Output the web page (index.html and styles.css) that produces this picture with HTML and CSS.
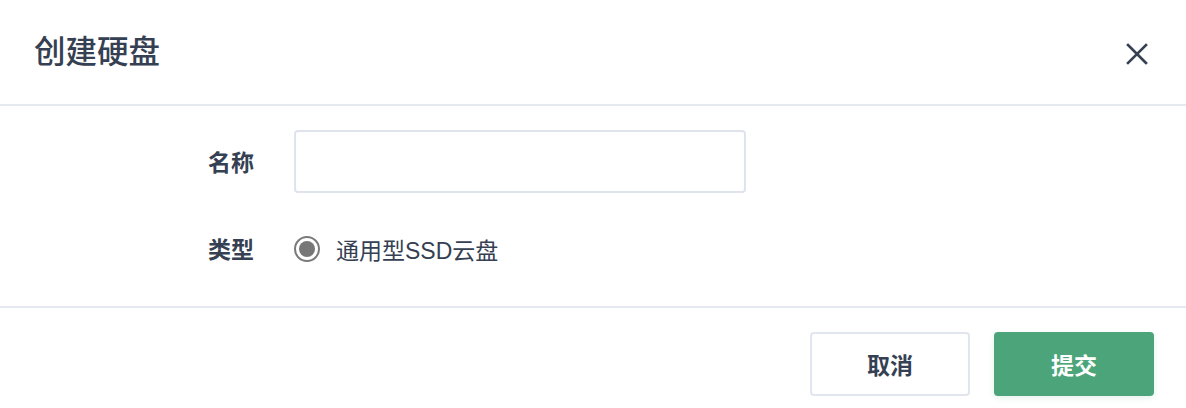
FILE: index.html
```html
<!DOCTYPE html>
<html lang="zh">
<head>
<meta charset="utf-8">
<link rel="stylesheet" href="styles.css">
</head>
<body>
<div class="modal">
  <div class="modal-header">
    <h2 class="title">创建硬盘</h2>
    <button class="close" aria-label="close">
      <svg width="22" height="22" viewBox="0 0 22 22"><path d="M2 2L20 20M20 2L2 20" stroke="#354052" stroke-width="2.6" stroke-linecap="square"/></svg>
    </button>
  </div>
  <div class="modal-body">
    <div class="row">
      <label class="label">名称</label>
      <input class="input" type="text">
    </div>
    <div class="row row-type">
      <span class="label">类型</span>
      <span class="radio"><span class="radio-dot"></span></span>
      <span class="radio-text">通用型SSD云盘</span>
    </div>
  </div>
  <div class="modal-footer">
    <button class="btn btn-cancel">取消</button>
    <button class="btn btn-primary">提交</button>
  </div>
</div>
</body>
</html>
```
FILE: styles.css
```css
* { box-sizing: border-box; }
html, body { margin: 0; padding: 0; background: #fff; }
body {
  font-family: "Noto Sans CJK SC", "Noto Sans", sans-serif;
  color: #354052;
  width: 1186px;
  height: 408px;
  overflow: hidden;
}
.modal { width: 1186px; }
.modal-header {
  height: 106px;
  border-bottom: 2px solid #e6e9ef;
  display: flex;
  align-items: center;
  justify-content: space-between;
  padding: 0 38px 0 34px;
}
.title {
  margin: 0;
  font-size: 31.5px;
  font-weight: 500;
  line-height: 1;
  margin-top: -4px;
  color: #354052;
}
.close {
  border: 0;
  background: none;
  padding: 0;
  width: 22px;
  height: 22px;
  display: flex;
  margin-top: 4px;
}
.modal-body {
  padding: 24px 0 0 0;
  height: 202px;
  border-bottom: 2px solid #e6e9ef;
}
.row {
  display: flex;
  align-items: center;
  height: 63px;
}
.row-type { margin-top: 24px; height: 64px; }
.label {
  width: 254px;
  text-align: right;
  font-size: 23px;
  font-weight: 700;
  margin-right: 40px;
  margin-top: -2px;
  color: #354052;
}
.input {
  width: 452px;
  height: 63px;
  border: 2px solid #dfe3ec;
  border-radius: 4px;
  outline: none;
  font-size: 20px;
}
.radio {
  width: 26px;
  height: 26px;
  border: 2px solid #7a7a7a;
  border-radius: 50%;
  display: flex;
  align-items: center;
  justify-content: center;
}
.radio-dot {
  width: 16px;
  height: 16px;
  border-radius: 50%;
  background: #777;
}
.radio-text {
  margin-left: 16px;
  font-family: "Liberation Sans", "Noto Sans CJK SC", sans-serif;
  font-size: 23px;
  color: #354052;
}
.modal-footer {
  display: flex;
  justify-content: flex-end;
  gap: 24px;
  padding: 24px 32px 0 0;
}
.btn {
  width: 160px;
  height: 64px;
  border-radius: 4px;
  font-family: inherit;
  font-size: 23px;
  font-weight: 700;
  cursor: pointer;
}
.btn-cancel {
  background: #fff;
  border: 2px solid #e1e5ee;
  color: #354052;
}
.btn-primary {
  background: #4ca57a;
  border: 0;
  color: #fff;
  box-shadow: 0 2px 6px rgba(76,165,122,0.15);
}
```
